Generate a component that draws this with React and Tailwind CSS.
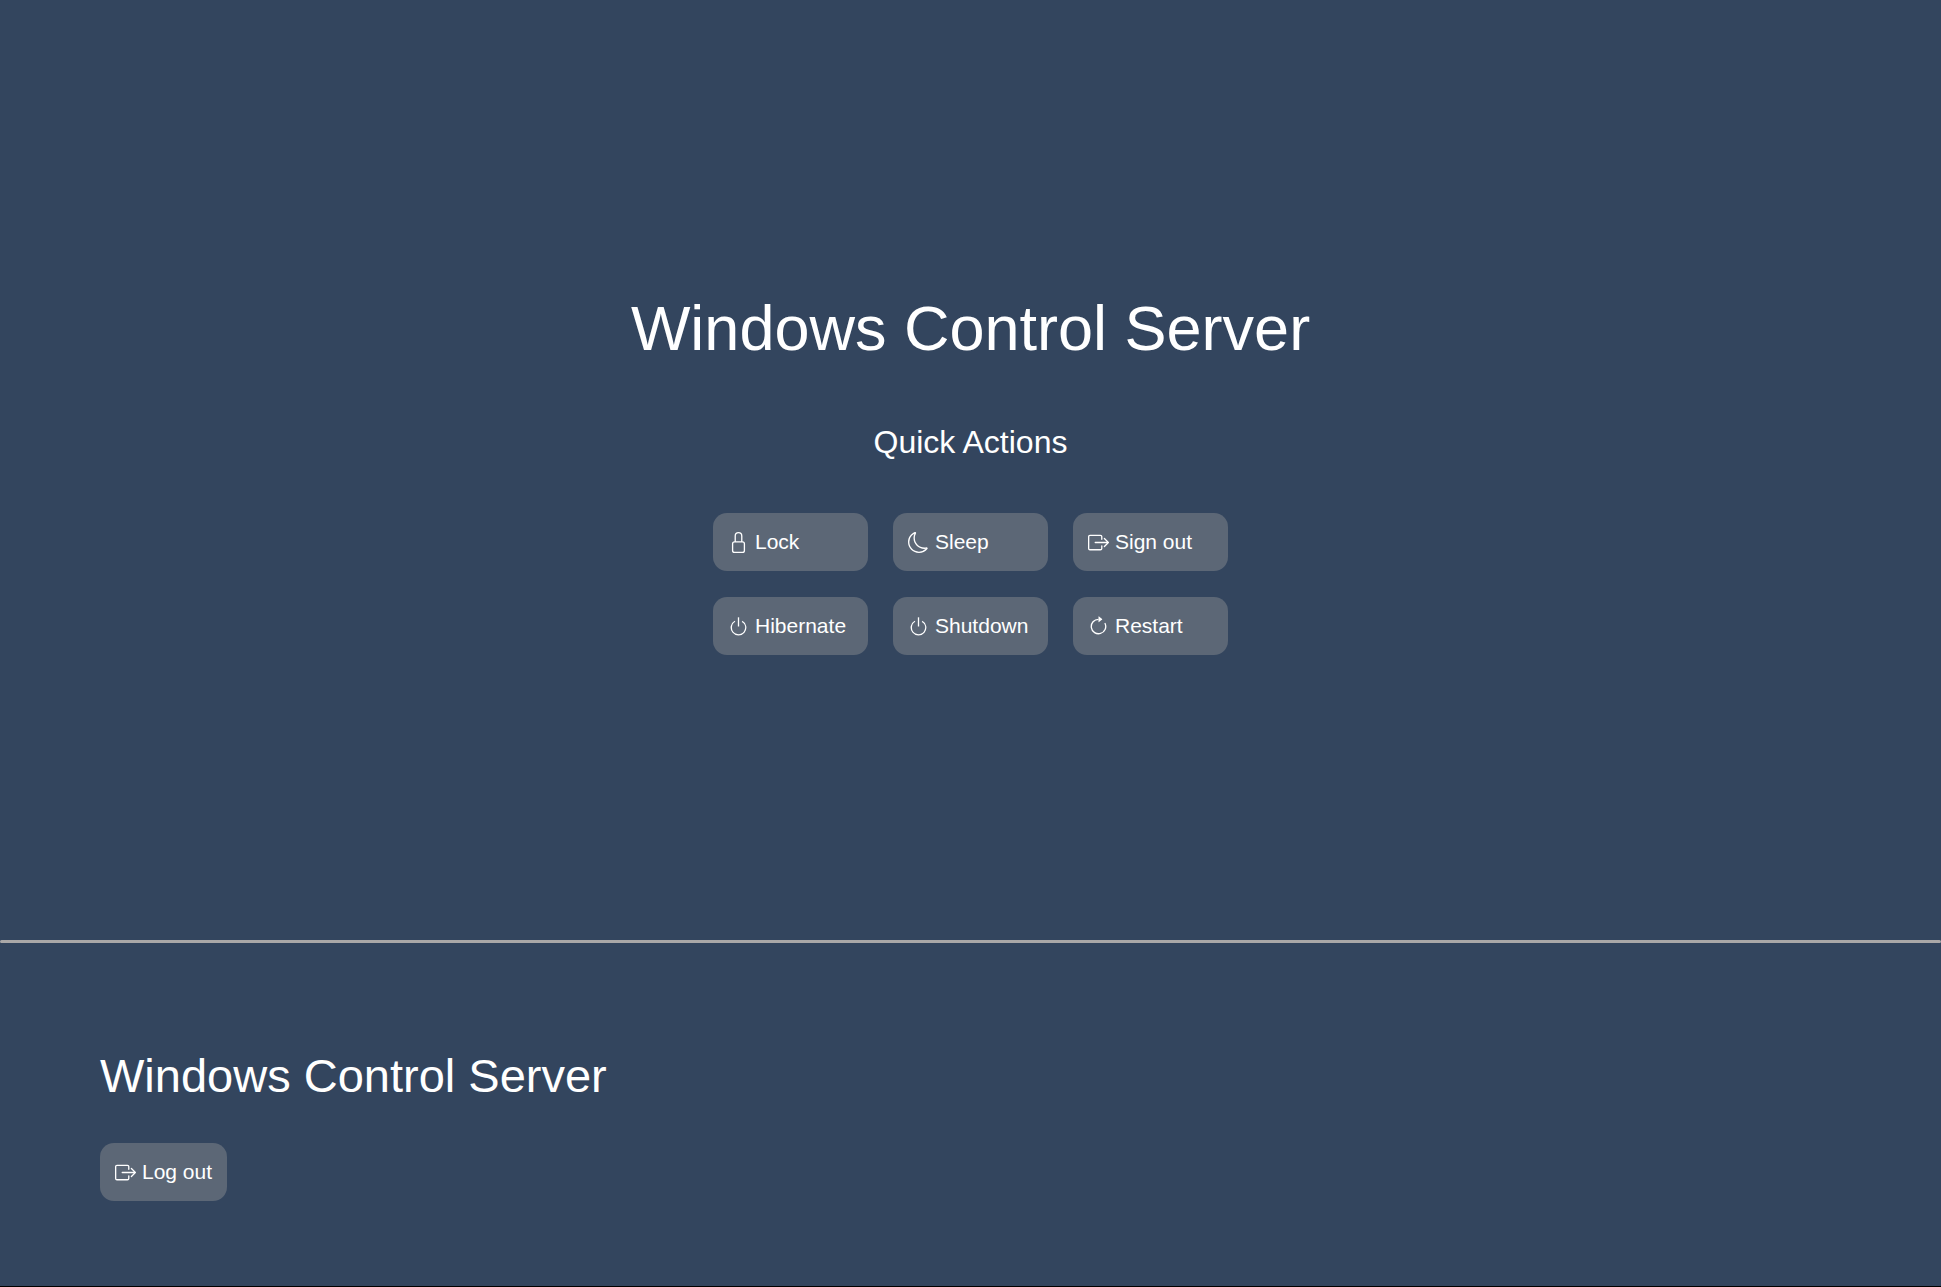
import { BsLock, BsMoon, BsBoxArrowRight, BsPower, BsArrowClockwise } from "react-icons/bs";

const actions = [
  { label: "Lock", Icon: BsLock },
  { label: "Sleep", Icon: BsMoon },
  { label: "Sign out", Icon: BsBoxArrowRight },
  { label: "Hibernate", Icon: BsPower },
  { label: "Shutdown", Icon: BsPower },
  { label: "Restart", Icon: BsArrowClockwise },
];

function ActionButton({ label, Icon }) {
  return (
    <button
      type="button"
      className="flex items-center gap-1.5 rounded-[14px] bg-[#5c6776] px-[15px] py-3.5 text-[21px] leading-[30px] text-white"
    >
      <Icon className="size-[21px]" aria-hidden="true" />
      {label}
    </button>
  );
}

export default function App() {
  return (
    <div className="flex min-h-screen flex-col border-b border-black bg-[#33455e] font-['Liberation_Sans',Arial,sans-serif] text-white">
      <main className="flex grow flex-col items-center justify-center pt-[3px]">
        <h1 className="text-[63px] leading-[80px]">Windows Control Server</h1>
        <h2 className="mt-[55px] text-[32px] leading-[38px]">Quick Actions</h2>
        <div className="mt-[52px] grid grid-cols-[repeat(3,155px)] gap-x-[25px] gap-y-[26px]">
          {actions.map((action) => (
            <ActionButton key={action.label} {...action} />
          ))}
        </div>
      </main>
      <hr className="h-[3px] rounded-full border-0 bg-[#aaa8a8]" />
      <footer className="px-[100px] pt-[104px] pb-[85px]">
        <h2 className="text-[47px] leading-[57px]">Windows Control Server</h2>
        <div className="mt-[39px] flex">
          <ActionButton label="Log out" Icon={BsBoxArrowRight} />
        </div>
      </footer>
    </div>
  );
}
